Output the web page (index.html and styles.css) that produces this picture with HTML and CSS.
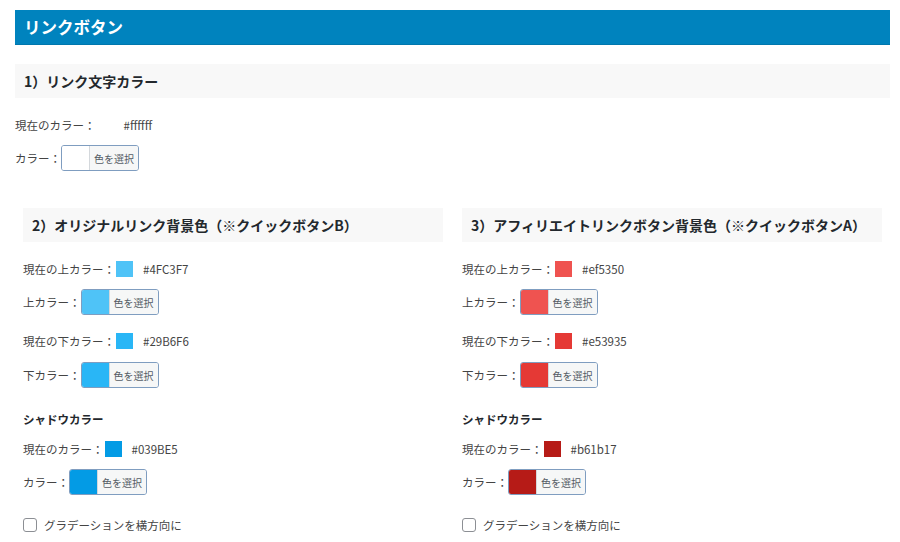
FILE: index.html
```html
<!DOCTYPE html>
<html lang="ja">
<head>
<meta charset="utf-8">
<title>リンクボタン</title>
<link rel="stylesheet" href="styles.css">
</head>
<body>
<div class="page">
  <h2 class="title">リンクボタン</h2>

  <section class="sec1">
    <h3 class="sec-head">1）リンク文字カラー</h3>
    <div class="row row-first">
      <span class="label">現在のカラー：</span>
      <span class="swatch swatch-none"></span>
      <span class="hex">#ffffff</span>
    </div>
    <div class="row row-btn">
      <span class="label">カラー：</span>
      <button class="picker" type="button"><span class="picker-color c-white"></span><span class="picker-text">色を選択</span></button>
    </div>
  </section>

  <div class="cols">
    <section class="col">
      <h3 class="sec-head">2）オリジナルリンク背景色（※クイックボタンB）</h3>
      <div class="row row-first">
        <span class="label">現在の上カラー：</span>
        <span class="swatch c-4fc3f7"></span>
        <span class="hex">#4FC3F7</span>
      </div>
      <div class="row row-btn">
        <span class="label">上カラー：</span>
        <button class="picker" type="button"><span class="picker-color c-4fc3f7"></span><span class="picker-text">色を選択</span></button>
      </div>
      <div class="row row-next">
        <span class="label">現在の下カラー：</span>
        <span class="swatch c-29b6f6"></span>
        <span class="hex">#29B6F6</span>
      </div>
      <div class="row row-btn2">
        <span class="label">下カラー：</span>
        <button class="picker" type="button"><span class="picker-color c-29b6f6"></span><span class="picker-text">色を選択</span></button>
      </div>
      <h4 class="sub-head">シャドウカラー</h4>
      <div class="row row-sub">
        <span class="label">現在のカラー：</span>
        <span class="swatch c-039be5"></span>
        <span class="hex">#039BE5</span>
      </div>
      <div class="row row-btn">
        <span class="label">カラー：</span>
        <button class="picker" type="button"><span class="picker-color c-039be5"></span><span class="picker-text">色を選択</span></button>
      </div>
      <label class="check"><span class="box"></span><span>グラデーションを横方向に</span></label>
    </section>

    <section class="col">
      <h3 class="sec-head">3）アフィリエイトリンクボタン背景色（※クイックボタンA）</h3>
      <div class="row row-first">
        <span class="label">現在の上カラー：</span>
        <span class="swatch c-ef5350"></span>
        <span class="hex">#ef5350</span>
      </div>
      <div class="row row-btn">
        <span class="label">上カラー：</span>
        <button class="picker" type="button"><span class="picker-color c-ef5350"></span><span class="picker-text">色を選択</span></button>
      </div>
      <div class="row row-next">
        <span class="label">現在の下カラー：</span>
        <span class="swatch c-e53935"></span>
        <span class="hex">#e53935</span>
      </div>
      <div class="row row-btn2">
        <span class="label">下カラー：</span>
        <button class="picker" type="button"><span class="picker-color c-e53935"></span><span class="picker-text">色を選択</span></button>
      </div>
      <h4 class="sub-head">シャドウカラー</h4>
      <div class="row row-sub">
        <span class="label">現在のカラー：</span>
        <span class="swatch c-b61b17"></span>
        <span class="hex">#b61b17</span>
      </div>
      <div class="row row-btn">
        <span class="label">カラー：</span>
        <button class="picker" type="button"><span class="picker-color c-b61b17"></span><span class="picker-text">色を選択</span></button>
      </div>
      <label class="check"><span class="box"></span><span>グラデーションを横方向に</span></label>
    </section>
  </div>
</div>
</body>
</html>
```

FILE: styles.css
```css
* { box-sizing: border-box; }

html, body {
  margin: 0;
  padding: 0;
  background: #ffffff;
}

body {
  font-family: "Noto Sans CJK JP", "Noto Sans", sans-serif;
  font-size: 11.5px;
  color: #444444;
}

.page {
  width: 900px;
  padding: 10px 10px 0 15px;
}

.title {
  margin: 0;
  height: 35px;
  line-height: 35px;
  padding-left: 9px;
  background: #0083be;
  border-bottom: 1px solid #0077ad;
  color: #ffffff;
  font-size: 16.5px;
  font-weight: 700;
}

.sec1 {
  margin-top: 19px;
}

.sec-head {
  margin: 0;
  height: 34px;
  line-height: 34px;
  padding-left: 9px;
  background: #f8f8f8;
  color: #23282d;
  font-size: 14px;
  font-weight: 700;
  white-space: nowrap;
}

.row {
  display: flex;
  align-items: center;
  height: 26px;
  white-space: nowrap;
}

.row-first { margin-top: 14px; }
.row-btn { margin-top: 7px; }
.row-next { margin-top: 13px; }
.row-btn2 { margin-top: 8px; }
.row-sub { margin-top: 7px; }

.label {
  color: #444444;
}

.swatch {
  width: 17px;
  height: 16px;
  margin-left: 1px;
}

.swatch-none {
  background: #ffffff;
}

.hex {
  margin-left: 10px;
  color: #444444;
}

.picker {
  display: flex;
  align-items: stretch;
  width: 78px;
  height: 26px;
  padding: 0;
  margin: 0;
  border: 1px solid #7f9dc0;
  border-radius: 3px;
  overflow: hidden;
  background: #f6f7f7;
  font-family: inherit;
  cursor: pointer;
}

.picker-color {
  width: 27px;
  flex: none;
}

.picker-text {
  flex: 1;
  display: flex;
  align-items: center;
  justify-content: center;
  background: #f6f7f7;
  border-left: 1px solid #d4d8dc;
  color: #555d66;
  font-size: 10px;
}

.c-white { background: #ffffff; }
.c-4fc3f7 { background: #4fc3f7; }
.c-29b6f6 { background: #29b6f6; }
.c-039be5 { background: #039be5; }
.c-ef5350 { background: #ef5350; }
.c-e53935 { background: #e53935; }
.c-b61b17 { background: #b61b17; }

.cols {
  display: flex;
  gap: 19px;
  margin-top: 37px;
  padding-left: 8px;
}

.col {
  width: 420px;
}

.col .row-first { margin-top: 14px; }

.sub-head {
  margin: 21px 0 0;
  height: 20px;
  line-height: 20px;
  font-size: 11.5px;
  font-weight: 700;
  color: #23282d;
}

.check {
  display: flex;
  align-items: center;
  gap: 7px;
  height: 20px;
  margin-top: 20px;
  color: #444444;
}

.box {
  width: 14px;
  height: 14px;
  border: 1px solid #8c8f94;
  border-radius: 3px;
  background: #ffffff;
}
```
